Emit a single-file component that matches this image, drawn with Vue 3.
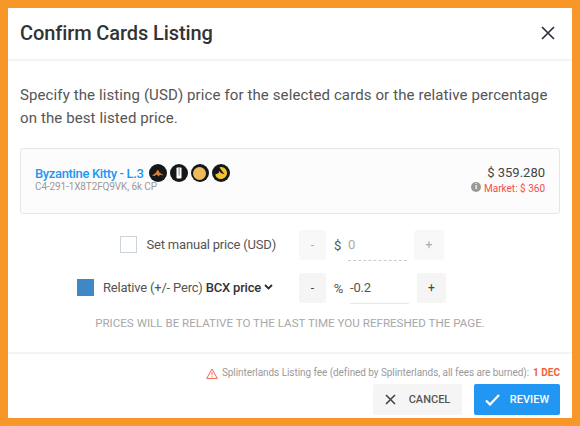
<template>
  <div class="frame">
    <section class="modal">
      <header class="modal__head">
        <h2 class="modal__title">Confirm Cards Listing</h2>
        <button class="modal__close" aria-label="Close">
          <svg width="14" height="14" viewBox="0 0 14 14">
            <path d="M1 1 13 13M13 1 1 13" stroke="#2b3340" stroke-width="1.7" fill="none" />
          </svg>
        </button>
      </header>

      <div class="modal__body">
        <p class="intro">
          Specify the listing (USD) price for the selected cards or the relative percentage on the best listed price.
        </p>

        <div class="card">
          <div>
            <div class="card__name-row">
              <a class="card__name">Byzantine Kitty - L.3</a>
              <span class="badges">
                <span class="badge">
                  <svg width="14" height="14" viewBox="0 0 14 14">
                    <path d="M1 9.5 4.5 7 7 3.5 8.5 6.5 13 9.5 9 8.8 7.5 10.5 5.8 8.5 3.5 10Z" fill="#d9813c" />
                  </svg>
                </span>
                <span class="badge">
                  <svg width="14" height="14" viewBox="0 0 14 14">
                    <rect x="4.5" y="1.5" width="5" height="11" rx="0.8" fill="#fff" />
                    <rect x="6.7" y="2" width="0.8" height="7.5" fill="#666" />
                  </svg>
                </span>
                <span class="badge">
                  <span class="badge__coin"></span>
                </span>
                <span class="badge">
                  <svg width="14" height="14" viewBox="0 0 14 14">
                    <path d="M5.5 1.2A6 6 0 1 1 1.2 8.5L4.8 7 5 4.8 7 7 10.5 8.3 6.8 3.5Z" fill="#f2c230" />
                  </svg>
                </span>
              </span>
            </div>
            <div class="card__uid">C4-291-1X8T2FQ9VK, 6k CP</div>
          </div>
          <div class="card__prices">
            <div class="card__price">$ 359.280</div>
            <div class="card__market">
              <span class="info">i</span>
              <span>Market: $ 360</span>
            </div>
          </div>
        </div>

        <div class="price-row">
          <div class="price-row__label price-row__label--manual">
            <span class="check"></span>
            <span>Set manual price (USD)</span>
          </div>
          <div class="stepper stepper--off">
            <button class="stepper__btn">-</button>
            <span class="stepper__unit">$</span>
            <span class="stepper__input">0</span>
            <button class="stepper__btn">+</button>
          </div>
        </div>

        <div class="price-row price-row--second">
          <div class="price-row__label">
            <span class="check check--on"></span>
            <span>Relative (+/- Perc) <b class="select">BCX price</b></span>
            <svg class="chevron" width="9" height="6" viewBox="0 0 9 6">
              <path d="M1 1 4.5 4.5 8 1" stroke="#2b2b2b" stroke-width="1.8" fill="none" />
            </svg>
          </div>
          <div class="stepper">
            <button class="stepper__btn">-</button>
            <span class="stepper__unit">%</span>
            <span class="stepper__input">-0.2</span>
            <button class="stepper__btn">+</button>
          </div>
        </div>

        <p class="note">PRICES WILL BE RELATIVE TO THE LAST TIME YOU REFRESHED THE PAGE.</p>
      </div>

      <footer class="modal__foot">
        <div class="fee">
          <svg width="12" height="11" viewBox="0 0 12 11">
            <path d="M6 1 11.3 10.4H.7Z" stroke="#f0654a" stroke-width="1" fill="none" stroke-linejoin="round" />
            <path d="M6 4V7.3M6 8.2V9.2" stroke="#f0654a" stroke-width="1" fill="none" />
          </svg>
          <span class="fee__text">Splinterlands Listing fee (defined by Splinterlands, all fees are burned):</span>
          <b class="fee__amount">1 DEC</b>
        </div>
        <div class="actions">
          <button class="btn btn--cancel">
            <svg width="11" height="11" viewBox="0 0 11 11">
              <path d="M1 1 10 10M10 1 1 10" stroke="#444" stroke-width="1.6" fill="none" />
            </svg>
            CANCEL
          </button>
          <button class="btn btn--review">
            <svg width="15" height="12" viewBox="0 0 15 12">
              <path d="M1 6.5 5 10.5 14 1" stroke="#fff" stroke-width="2.2" fill="none" />
            </svg>
            REVIEW
          </button>
        </div>
      </footer>
    </section>
  </div>
</template>

<script setup>
</script>

<style>
html,
body {
  margin: 0;
}
</style>

<style scoped>
.frame {
  box-sizing: border-box;
  width: 580px;
  height: 426px;
  padding: 8px;
  background: #f79727;
  font-family: Roboto, "Liberation Sans", sans-serif;
}

.modal {
  display: flex;
  flex-direction: column;
  height: 100%;
  background: #fff;
}

.modal__head {
  display: flex;
  align-items: center;
  justify-content: space-between;
  box-sizing: border-box;
  height: 53px;
  padding: 0 17px 2px 12px;
  border-bottom: 2px solid #f4f4f4;
}

.modal__title {
  margin: 0;
  font-size: 20px;
  font-weight: 500;
  letter-spacing: -0.1px;
  color: #333;
}

.modal__close {
  display: flex;
  padding: 0;
  border: 0;
  background: none;
}

.modal__body {
  flex: 1;
  padding: 0 12px;
}

.intro {
  margin: 23px 0 0;
  font-size: 15px;
  line-height: 23px;
  letter-spacing: 0.11px;
  color: #555;
}

.card {
  display: flex;
  justify-content: space-between;
  box-sizing: border-box;
  height: 66px;
  margin-top: 18px;
  padding: 15px 14px;
  border: 1px solid #e6e6e6;
  border-radius: 3px;
  background: #fcfcfc;
}

.card__name-row {
  display: flex;
  align-items: center;
  gap: 5px;
}

.card__name {
  font-size: 13px;
  font-weight: 500;
  letter-spacing: -0.35px;
  color: #2196f3;
}

.badges {
  display: flex;
  gap: 3px;
}

.badge {
  display: flex;
  align-items: center;
  justify-content: center;
  width: 18px;
  height: 18px;
  border-radius: 50%;
  background: #15181b;
}

.badge__coin {
  width: 13px;
  height: 13px;
  border-radius: 50%;
  background: #eebb5a;
}

.card__uid {
  margin-top: -1px;
  font-size: 10px;
  letter-spacing: -0.12px;
  color: #9a9a9a;
}

.card__prices {
  text-align: right;
}

.card__price {
  font-size: 13px;
  line-height: 17px;
  color: #444;
}

.card__market {
  display: flex;
  align-items: center;
  justify-content: flex-end;
  gap: 3px;
  margin-top: 1px;
  font-size: 10px;
  line-height: 13px;
  color: #f44d4d;
}

.info {
  width: 10px;
  height: 10px;
  margin-top: -3px;
  border-radius: 50%;
  background: #999;
  color: #fff;
  font-size: 8px;
  font-weight: 700;
  line-height: 10px;
  text-align: center;
}

.price-row {
  display: flex;
  margin-top: 15px;
  height: 32px;
  font-size: 13px;
  letter-spacing: -0.2px;
  color: #555;
}

.price-row--second {
  margin-top: 11px;
}

.price-row__label {
  display: flex;
  align-items: center;
  justify-content: flex-end;
  gap: 9px;
  box-sizing: border-box;
  width: 279px;
  padding-right: 26px;
  padding-bottom: 2px;
}

.price-row__label--manual {
  gap: 10px;
  padding-right: 23px;
}

.check {
  box-sizing: border-box;
  width: 17px;
  height: 17px;
  border: 1px solid #ccd3da;
}

.check--on {
  border: 0;
  background: #3f88c8;
}

.select {
  font-weight: 500;
  color: #333;
}

.chevron {
  margin-left: -6px;
}

.stepper {
  display: flex;
  align-items: center;
}

.stepper__btn {
  width: 27px;
  height: 30px;
  padding: 0;
  border: 0;
  border-radius: 3px;
  background: #f5f5f5;
  font: 400 12px Roboto, sans-serif;
  color: #444;
}

.stepper__btn:last-child {
  width: 29px;
  margin-left: 8px;
}

.stepper__unit {
  width: 17px;
  text-align: right;
  font-size: 13px;
  color: #555;
}

.stepper__input {
  box-sizing: border-box;
  width: 59px;
  height: 32px;
  margin-left: 7px;
  padding-left: 0;
  border-bottom: 1px solid #e8e8e8;
  font-size: 13px;
  line-height: 32px;
  color: #555;
}

.stepper--off .stepper__btn {
  color: #aaa;
  background: #f8f8f8;
}

.stepper--off .stepper__btn:last-child {
  width: 30px;
  margin-left: 7px;
}

.stepper--off .stepper__unit {
  width: 15px;
}

.stepper--off .stepper__input {
  width: 59px;
  margin-left: 7px;
  border-bottom: 1px dashed #ccc;
  color: #aaa;
}

.note {
  margin: 12px 0 0;
  font-size: 11.6px;
  text-align: center;
  color: #a8a8a8;
}

.modal__foot {
  box-sizing: border-box;
  height: 66px;
  padding: 12px 12px 0;
  border-top: 2px solid #f4f4f4;
}

.fee {
  display: flex;
  align-items: center;
  justify-content: flex-end;
  gap: 4px;
  font-size: 10px;
  line-height: 14px;
  color: #9a9a9a;
}

.fee__text {
  letter-spacing: -0.06px;
}

.fee__amount {
  color: #f4623a;
}

.actions {
  display: flex;
  justify-content: flex-end;
  gap: 12px;
  margin-top: 4px;
}

.btn {
  display: flex;
  align-items: center;
  justify-content: center;
  height: 31px;
  padding: 0;
  border: 0;
  border-radius: 2px;
  font: 500 11px Roboto, sans-serif;
}

.btn--cancel {
  gap: 13px;
  width: 89px;
  background: #f5f5f5;
  color: #555;
}

.btn--review {
  gap: 10px;
  width: 86px;
  background: #2196f3;
  color: #fff;
}
</style>
